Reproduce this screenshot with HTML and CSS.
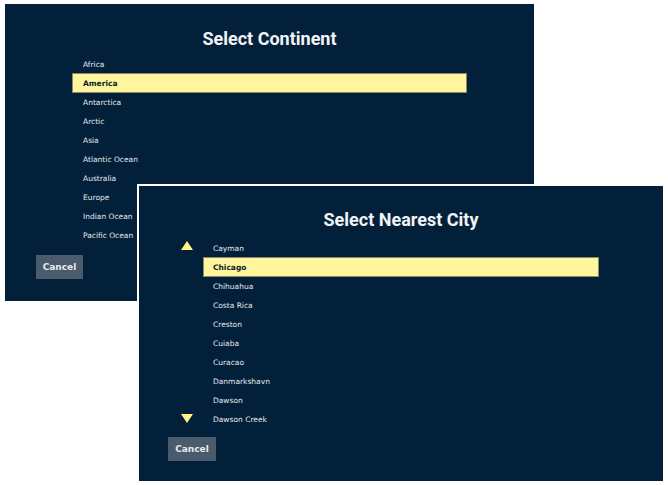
FILE: index.html
```html
<!DOCTYPE html>
<html>
<head>
<meta charset="utf-8">
<link rel="stylesheet" href="styles.css">
</head>
<body>
<div class="desk">
  <section class="window w1">
    <h1 class="title">Select Continent</h1>
    <ul class="list">
      <li>Africa</li>
      <li class="sel">America</li>
      <li>Antarctica</li>
      <li>Arctic</li>
      <li>Asia</li>
      <li>Atlantic Ocean</li>
      <li>Australia</li>
      <li>Europe</li>
      <li>Indian Ocean</li>
      <li>Pacific Ocean</li>
    </ul>
    <button class="cancel">Cancel</button>
  </section>

  <section class="window w2">
    <h1 class="title">Select Nearest City</h1>
    <div class="body">
      <div class="arrows">
        <svg class="arrow" width="12" height="9" viewBox="0 0 12 9"><polygon points="6,0 12,9 0,9" fill="#fff38a"/></svg>
        <svg class="arrow" width="12" height="9" viewBox="0 0 12 9"><polygon points="0,0 12,0 6,9" fill="#fff38a"/></svg>
      </div>
      <ul class="list">
        <li>Cayman</li>
        <li class="sel">Chicago</li>
        <li>Chihuahua</li>
        <li>Costa Rica</li>
        <li>Creston</li>
        <li>Cuiaba</li>
        <li>Curacao</li>
        <li>Danmarkshavn</li>
        <li>Dawson</li>
        <li>Dawson Creek</li>
      </ul>
    </div>
    <button class="cancel">Cancel</button>
  </section>
</div>
</body>
</html>
```
FILE: styles.css
```css
html, body {
  margin: 0;
  padding: 0;
  background: #ffffff;
}

.desk {
  position: relative;
  width: 668px;
  height: 485px;
  overflow: hidden;
}

.window {
  position: absolute;
  display: flex;
  flex-direction: column;
  align-items: flex-start;
  box-sizing: border-box;
  background: #03203a;
  font-family: "DejaVu Sans", Verdana, sans-serif;
}

.w1 {
  left: 5px;
  top: 4px;
  width: 529px;
  height: 297px;
}

.w2 {
  left: 137px;
  top: 184px;
  width: 528px;
  height: 299px;
  border: 2px solid #ffffff;
}

.title {
  align-self: stretch;
  margin: 0;
  text-align: center;
  font-family: Roboto, "Liberation Sans", sans-serif;
  font-weight: 700;
  font-size: 18px;
  line-height: 18px;
  color: #f1f3f5;
}

.w1 .title {
  padding-top: 26px;
  margin-bottom: 6px;
}

.w2 .title {
  padding-top: 25px;
  margin-bottom: 9px;
}

.list {
  list-style: none;
  margin: 0;
  padding: 0;
}

.w1 .list {
  margin-left: 67px;
  width: 395px;
}

.w2 .list {
  width: 396px;
}

.list li {
  box-sizing: border-box;
  height: 19px;
  line-height: 21px;
  padding-left: 11px;
  font-size: 7.5px;
  color: #e3e9ee;
  white-space: nowrap;
}

.w2 .list li {
  padding-left: 10px;
}

.list li.sel {
  height: 20px;
  margin-bottom: -1px;
  line-height: 19px;
  padding-left: 10px;
  background: #fff59d;
  border: 1px solid #8c8a62;
  color: #0a1a2a;
  font-weight: 700;
}

.w2 .list li.sel {
  padding-left: 9px;
}

.body {
  display: flex;
  gap: 10px;
  padding-left: 42px;
}

.arrows {
  display: flex;
  flex-direction: column;
  justify-content: space-between;
  width: 12px;
  padding-top: 3px;
  padding-bottom: 5px;
}

.arrow {
  display: block;
}

.cancel {
  box-sizing: border-box;
  height: 24px;
  padding: 0;
  border: none;
  background: #4a5b6c;
  color: #e6ecf0;
  font-family: "DejaVu Sans", Verdana, sans-serif;
  font-weight: 700;
  font-size: 9px;
}

.w1 .cancel {
  width: 47px;
  margin-left: 31px;
  margin-top: 11px;
}

.w2 .cancel {
  width: 48px;
  margin-left: 29px;
  margin-top: 9px;
}
```
